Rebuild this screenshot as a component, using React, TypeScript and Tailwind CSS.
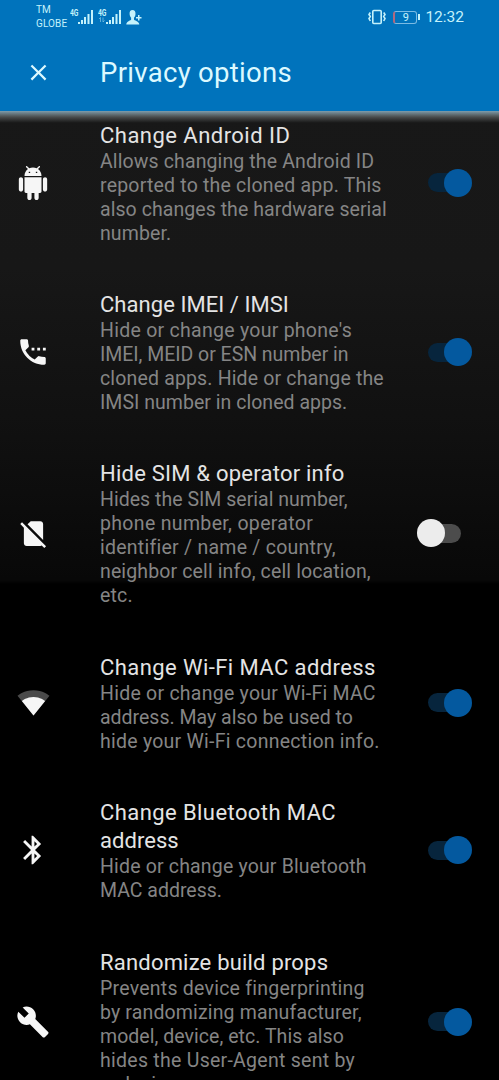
import React from 'react'
import { MdBluetooth, MdClose } from 'react-icons/md'

type Line = [text: string, tracking: string]

interface Option {
  icon: React.ReactNode
  title: Line[]
  description: Line[]
  enabled: boolean
}

const AndroidIcon = () => (
  <svg viewBox="0 0 24 24" className="size-[34px]" fill="currentColor">
    <path d="M6 18c0 .55.45 1 1 1h1v3.500c0 .83.67 1.500 1.500 1.500s1.500-.67 1.500-1.500V19h2v3.500c0 .83.67 1.500 1.500 1.500s1.500-.67 1.500-1.500V19h1c.55 0 1-.45 1-1V8H6v10zM3.500 8C2.670 8 2 8.670 2 9.500v7c0 .83.67 1.500 1.500 1.500S5 17.330 5 16.500v-7C5 8.670 4.330 8 3.500 8zm17 0c-.83 0-1.500.67-1.500 1.500v7c0 .83.67 1.500 1.500 1.500s1.500-.67 1.500-1.500v-7c0-.83-.67-1.500-1.500-1.500zm-4.970-5.840 1.300-1.300c.2-.2.2-.51 0-.71-.2-.2-.51-.2-.71 0l-1.480 1.480C13.850 1.230 12.950 1 12 1c-.96 0-1.860.23-2.660.63L7.850.15c-.2-.2-.51-.2-.71 0-.2.2-.2.51 0 .71l1.310 1.310C6.970 3.260 6 5.010 6 7h12c0-1.990-.97-3.750-2.470-4.840zM10 5H9V4h1v1zm5 0h-1V4h1v1z" />
  </svg>
)

const PhoneIcon = () => (
  <svg viewBox="0 0 24 24" className="size-[34px]" fill="currentColor">
    <path d="M20 15.500c-1.250 0-2.450-.2-3.570-.57a1 1 0 0 0-1.020.24l-2.200 2.200a15.070 15.070 0 0 1-6.590-6.580l2.200-2.210c.28-.27.36-.66.25-1.010A11.360 11.360 0 0 1 8.500 4c0-.55-.45-1-1-1H4c-.55 0-1 .45-1 1 0 9.390 7.610 17 17 17 .55 0 1-.45 1-1v-3.500c0-.55-.45-1-1-1zM11 9h2v2h-2zm4 0h2v2h-2zm4 0h2v2h-2z" />
  </svg>
)

const NoSimIcon = () => (
  <svg viewBox="0 0 24 24" className="mt-px size-[33px]" fill="currentColor">
    <path d="M18.990 5c0-1.100-.89-2-1.990-2h-7L7.660 5.340 19 16.680 18.990 5zM3.650 3.880 2.380 5.150 5 7.770V19c0 1.100.9 2 2 2h10.010c.35 0 .67-.1.96-.26l1.880 1.880 1.270-1.270L3.650 3.880z" />
  </svg>
)

const WifiIcon = () => (
  <svg viewBox="0 0 24 24" className="size-[33px]" fill="currentColor">
    <path
      fillOpacity=".3"
      d="M12.010 21.490 23.640 7c-.45-.34-4.930-4-11.640-4C5.280 3 .81 6.660.36 7l11.630 14.490.01.01.01-.01z"
    />
    <path d="m3.530 10.950 8.460 10.540.01.01.01-.01 8.460-10.540C20.040 10.620 16.810 8 12 8c-4.810 0-8.040 2.620-8.470 2.950z" />
  </svg>
)

const WrenchIcon = () => (
  <svg viewBox="0 0 24 24" className="size-[34px]" fill="currentColor">
    <path d="M22.700 19l-9.100-9.100c.9-2.300.4-5-1.500-6.900-2-2-5-2.400-7.400-1.300L9 6 6 9 1.600 4.700C.4 7.100.9 10.100 2.900 12.100c1.900 1.900 4.600 2.400 6.900 1.500l9.100 9.100c.4.4 1 .4 1.400 0l2.300-2.300c.5-.4.5-1.100.1-1.400z" />
  </svg>
)

const OPTIONS: Option[] = [
  {
    icon: <AndroidIcon />,
    title: [['Change Android ID', 'tracking-[0.47px]']],
    description: [
      ['Allows changing the Android ID', 'tracking-[0.12px]'],
      ['reported to the cloned app. This', 'tracking-[0.2px]'],
      ['also changes the hardware serial', 'tracking-[0.06px]'],
      ['number.', 'tracking-[0.1px]'],
    ],
    enabled: true,
  },
  {
    icon: <PhoneIcon />,
    title: [['Change IMEI / IMSI', 'tracking-[0.05px]']],
    description: [
      ["Hide or change your phone's", 'tracking-[0.27px]'],
      ['IMEI, MEID or ESN number in', 'tracking-[-0.03px]'],
      ['cloned apps. Hide or change the', 'tracking-[0.16px]'],
      ['IMSI number in cloned apps.', 'tracking-[0.03px]'],
    ],
    enabled: true,
  },
  {
    icon: <NoSimIcon />,
    title: [['Hide SIM & operator info', 'tracking-[0.23px]']],
    description: [
      ['Hides the SIM serial number,', 'tracking-[0.02px]'],
      ['phone number, operator', 'tracking-[0.33px]'],
      ['identifier / name / country,', 'tracking-[0.25px]'],
      ['neighbor cell info, cell location,', 'tracking-[0.13px]'],
      ['etc.', 'tracking-[0.2px]'],
    ],
    enabled: false,
  },
  {
    icon: <WifiIcon />,
    title: [['Change Wi-Fi MAC address', 'tracking-[0.42px]']],
    description: [
      ['Hide or change your Wi-Fi MAC', 'tracking-[0.25px]'],
      ['address. May also be used to', 'tracking-[0px]'],
      ['hide your Wi-Fi connection info.', 'tracking-[0.25px]'],
    ],
    enabled: true,
  },
  {
    icon: <MdBluetooth className="size-[34px]" />,
    title: [
      ['Change Bluetooth MAC', 'tracking-[0.42px]'],
      ['address', 'tracking-[0.05px]'],
    ],
    description: [
      ['Hide or change your Bluetooth', 'tracking-[0.17px]'],
      ['MAC address.', 'tracking-[0px]'],
    ],
    enabled: true,
  },
  {
    icon: <WrenchIcon />,
    title: [['Randomize build props', 'tracking-[0.2px]']],
    description: [
      ['Prevents device fingerprinting', 'tracking-[0.24px]'],
      ['by randomizing manufacturer,', 'tracking-[0.15px]'],
      ['model, device, etc. This also', 'tracking-[0.04px]'],
      ['hides the User-Agent sent by', 'tracking-[0.27px]'],
      ['web views.', 'tracking-[0.2px]'],
    ],
    enabled: true,
  },
]

const Signal = ({ data }: { data?: boolean }) => (
  <div className="flex h-4 w-6">
    <div className="w-2">
      <div className="origin-left scale-x-75 text-[9px] font-bold leading-[8px]">4G</div>
      {data && (
        <svg viewBox="0 0 8 6" className="h-1.5 w-2" fill="none" stroke="currentColor" strokeWidth=".8" opacity=".6">
          <path d="M2.500 5V.5L1 2M5 .5V5l1.500-1.500" />
        </svg>
      )}
    </div>
    <svg viewBox="0 0 16 16" className="size-4" fill="currentColor">
      <path d="M0 13h2v2H0zM3 11h2v4H3zM6 8h2v7H6zM9.500 5h2v10h-2zM13 1h2v14h-2z" />
    </svg>
  </div>
)

const StatusBar = () => (
  <div className="flex h-[34px] items-center justify-between pl-9 pr-[35px] text-[#c4f2fb]">
    <div className="flex items-center">
      <div className="w-[34px] text-[10px] leading-[14px] tracking-[0.1px]">
        <div>TM</div>
        <div>GLOBE</div>
      </div>
      <div className="flex gap-1">
        <Signal />
        <Signal data />
        <svg viewBox="0 0 16 16" className="mt-px h-4 w-4" fill="currentColor">
          <path d="M6.500 0C4.500 0 3.400 1.500 3.600 4c.1 1.700.8 3 1.500 3.700v2C3.500 11 .5 11.300.3 14.500h13c-.2-3.200-3.600-3.500-5.300-4.800v-2c.8-.7 1.400-2 1.500-3.700C9.700 1.500 8.500 0 6.500 0zM12 5h1.500v2h2v1.500h-2v2H12v-2h-2V7h2z" />
        </svg>
      </div>
    </div>
    <div className="flex items-center">
      <svg viewBox="0 0 20 16" className="h-4 w-5" fill="none" stroke="currentColor" strokeWidth="1.600">
        <rect x="5.800" y="1.500" width="8.400" height="13" rx="1" />
        <path d="M3.300 3.500 2 5.500l1.300 2L2 9.500l1.300 2.500M16.700 3.500l1.300 2-1.300 2 1.300 2-1.300 2.500" />
      </svg>
      <div className="ml-[6px] flex h-[13px] w-6 items-center justify-center rounded-[3px] border border-[#7bbbe3] border-l-2 border-l-[#b0697f] text-[11px] leading-none">
        9
      </div>
      <div className="ml-px h-1.5 w-0.5 bg-current" />
      <div className="ml-[5px] text-[15.500px] leading-5">12:32</div>
    </div>
  </div>
)

const Toggle = ({ enabled }: { enabled: boolean }) => (
  <div
    className={`relative h-[19px] w-[33px] rounded-full ${enabled ? 'bg-[#07253d]' : 'bg-[#4c4c4c]'}`}
  >
    <div
      className={`absolute -top-[4.500px] size-7 rounded-full ${enabled ? 'left-[16px] bg-[#04599f]' : '-left-[11px] bg-[#ececec]'}`}
    />
  </div>
)

const OptionRow = ({ option }: { option: Option }) => (
  <div className="flex shrink-0 items-center py-[22.700px]">
    <div className="flex w-[66px] shrink-0 justify-center text-[#f6f6f6]">{option.icon}</div>
    <div className="-mb-px ml-[34px] w-[328px] shrink-0 whitespace-nowrap pt-px">
      {option.title.map(([text, tracking]) => (
        <div key={text} className={`text-[22px] leading-7 text-[#e4e4e4] ${tracking}`}>
          {text}
        </div>
      ))}
      {option.description.map(([text, tracking]) => (
        <div key={text} className={`text-[19.500px] leading-6 text-[#858585] ${tracking}`}>
          {text}
        </div>
      ))}
    </div>
    <Toggle enabled={option.enabled} />
  </div>
)

const App = () => (
  <div className="flex h-[1080px] w-[499px] flex-col overflow-hidden bg-black font-['Roboto',sans-serif]">
    <header className="z-10 h-[111px] shrink-0 bg-[#0073bc]">
      <StatusBar />
      <div className="flex h-[76px] items-center pl-[25px] text-[#dcf9ff]">
        <MdClose className="size-[27px]" />
        <h1 className="ml-12 pt-0.5 text-[27.500px] leading-8 tracking-[0.3px]">Privacy options</h1>
      </div>
    </header>
    {/* shadow the toolbar casts on the scrolled list */}
    <div className="z-10 h-3 shrink-0 bg-linear-to-b from-[#7f9dab] via-[#4a4d4d] to-[#171717]" />
    <main className="-mt-[25px] flex flex-col bg-[linear-gradient(to_bottom,#181818_0px,#171717_170px,#101010_340px,#080808_482px,#000000_486px)]">
      {OPTIONS.map((option) => (
        <OptionRow key={option.title[0][0]} option={option} />
      ))}
    </main>
  </div>
)

export default App
